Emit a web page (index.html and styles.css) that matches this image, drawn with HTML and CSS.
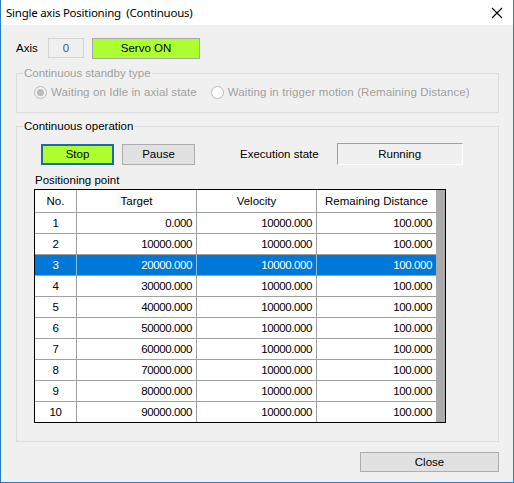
FILE: index.html
```html
<!DOCTYPE html>
<html>
<head>
<meta charset="utf-8">
<link rel="stylesheet" href="styles.css">
</head>
<body>
<div class="window">
  <div class="titlebar">
    <span class="title">Single axis Positioning&nbsp; (Continuous)</span>
    <svg class="close-x" width="12" height="12" viewBox="0 0 12 12"><path d="M1 1 L11 11 M11 1 L1 11" stroke="#000" stroke-width="1.1" fill="none"/></svg>
  </div>
  <div class="content">
    <div class="axis-row">
      <span class="axis-label">Axis</span>
      <span class="axis-box">0</span>
      <span class="servo">Servo ON</span>
    </div>
    <fieldset class="group standby">
      <legend>Continuous standby type</legend>
      <div class="radios">
        <span class="radio checked"></span><span class="radio-text">Waiting on Idle in axial state</span>
        <span class="radio"></span><span class="radio-text">Waiting in trigger motion (Remaining Distance)</span>
      </div>
    </fieldset>
    <fieldset class="group operation">
      <legend class="active">Continuous operation</legend>
      <div class="op-row">
        <span class="btn stop">Stop</span>
        <span class="btn pause">Pause</span>
        <span class="state-label">Execution state</span>
        <span class="state-box">Running</span>
      </div>
      <div class="points-label">Positioning point</div>
      <div class="grid-frame">
        <table class="grid">
          <colgroup><col class="c-no"><col class="c-val"><col class="c-val"><col class="c-last"></colgroup>
          <thead>
            <tr><th>No.</th><th>Target</th><th>Velocity</th><th class="last">Remaining Distance</th></tr>
          </thead>
          <tbody>
            <tr><td class="no">1</td><td>0.000</td><td>10000.000</td><td class="last">100.000</td></tr>
            <tr><td class="no">2</td><td>10000.000</td><td>10000.000</td><td class="last">100.000</td></tr>
            <tr class="sel"><td class="no">3</td><td>20000.000</td><td>10000.000</td><td class="last">100.000</td></tr>
            <tr><td class="no">4</td><td>30000.000</td><td>10000.000</td><td class="last">100.000</td></tr>
            <tr><td class="no">5</td><td>40000.000</td><td>10000.000</td><td class="last">100.000</td></tr>
            <tr><td class="no">6</td><td>50000.000</td><td>10000.000</td><td class="last">100.000</td></tr>
            <tr><td class="no">7</td><td>60000.000</td><td>10000.000</td><td class="last">100.000</td></tr>
            <tr><td class="no">8</td><td>70000.000</td><td>10000.000</td><td class="last">100.000</td></tr>
            <tr><td class="no">9</td><td>80000.000</td><td>10000.000</td><td class="last">100.000</td></tr>
            <tr class="final"><td class="no">10</td><td>90000.000</td><td>10000.000</td><td class="last">100.000</td></tr>
          </tbody>
        </table>
        <div class="strip"></div>
      </div>
    </fieldset>
    <div class="footer">
      <span class="btn close">Close</span>
    </div>
  </div>
</div>
</body>
</html>
```

FILE: styles.css
```css
* { box-sizing: border-box; }
html, body { margin: 0; padding: 0; background: #fff; }
body {
  font-family: "Liberation Sans", Arial, sans-serif;
  font-size: 11.5px;
  color: #000;
}
.window {
  width: 514px;
  height: 483px;
  border: 1px solid #2b7cc6;
  border-top: none;
  background: #f0f0f0;
  display: flex;
  flex-direction: column;
}
.titlebar {
  height: 25px;
  background: #fff;
  display: flex;
  align-items: center;
  justify-content: space-between;
  padding: 0 10px 0 5px;
  flex: none;
}
.title {
  font-family: "Noto Sans", "Open Sans", sans-serif;
  font-size: 11.5px;
  letter-spacing: -0.25px;
}
.close-x { display: block; margin-top: 1px; }
.content { flex: 1; display: flex; flex-direction: column; }

.axis-row {
  margin: 13px 0 0 15px;
  height: 20px;
  display: flex;
  align-items: center;
}
.axis-label { width: 32px; }
.axis-box {
  width: 36px;
  height: 20px;
  border: 1px solid #d4d4d4;
  color: #555;
  display: flex;
  align-items: center;
  justify-content: center;
}
.servo {
  margin-left: 8px;
  width: 108px;
  height: 21px;
  border: 1px solid #a8a8a8;
  background: #adff2f;
  display: flex;
  align-items: center;
  justify-content: center;
}

.group {
  margin: 0 14px 0 15px;
  border: 1px solid #dcdcdc;
  padding: 0 6px;
  min-width: 0;
}
.group legend {
  padding: 0 1px;
  line-height: 14px;
  height: 14px;
  color: #a0a0a0;
}
.group legend.active { color: #000; }
.standby { margin-top: 8px; padding-bottom: 13px; }
.radios {
  margin: 5px 0 0 11px;
  height: 14px;
  display: flex;
  align-items: center;
  color: #a0a0a0;
}
.radio {
  width: 13px;
  height: 13px;
  border-radius: 50%;
  border: 1px solid #bcbcbc;
  background: #fff;
  display: inline-flex;
  align-items: center;
  justify-content: center;
  flex: none;
}
.radio.checked { background: #f0f0f0; }
.radio.checked::after {
  content: "";
  width: 7px;
  height: 7px;
  border-radius: 50%;
  background: #bcbcbc;
}
.radio-text { margin-left: 4px; margin-right: 14px; letter-spacing: 0.1px; }

.operation { margin-top: 6px; padding-bottom: 18px; }
.op-row {
  margin: 10px 0 0 18px;
  height: 22px;
  display: flex;
  align-items: center;
}
.btn {
  display: inline-flex;
  align-items: center;
  justify-content: center;
}
.stop {
  width: 73px;
  height: 21px;
  border: 2px solid #1e6aa8;
  background: #adff2f;
}
.pause {
  margin-left: 8px;
  width: 73px;
  height: 21px;
  border: 1px solid #adadad;
  background: #e1e1e1;
}
.state-label { margin-left: 45px; }
.state-box {
  margin-left: 18px;
  width: 126px;
  height: 22px;
  border: 1px solid #a0a0a0;
  border-right-color: #fff;
  border-bottom-color: #fff;
  display: flex;
  align-items: center;
  justify-content: center;
}
.points-label {
  margin: 8px 0 0 12px;
  height: 14px;
  line-height: 14px;
}
.grid-frame {
  margin: 2px 0 0 11px;
  width: 412px;
  height: 234px;
  border: 1px solid #000;
  background: #fff;
  display: flex;
}
.grid {
  border-collapse: separate;
  border-spacing: 0;
  table-layout: fixed;
  width: 401px;
  flex: none;
}
.c-no { width: 42px; }
.c-val { width: 120px; }
.c-last { width: 119px; }
.grid th, .grid td {
  padding: 0 4px 0 0;
  border-right: 1px solid #a0a0a0;
  border-bottom: 1px solid #a0a0a0;
  font-weight: normal;
  white-space: nowrap;
  overflow: hidden;
}
.grid th {
  height: 23px;
  text-align: center;
  padding: 0;
}
.grid td {
  height: 21px;
  text-align: right;
  letter-spacing: -0.4px;
}
.grid td.no { text-align: center; padding: 0; }
.grid .last { border-right: none; }
.grid tr.final td { border-bottom: none; height: 20px; }
.grid tr.sel td {
  background: #0078d7;
  color: #fff;
  border-right-color: #8cc0ea;
  border-bottom-color: #a0a0a0;
}
.grid tr.sel td.last { border-right: none; }
.strip {
  flex: 1;
  background: #ababab;
}

.footer {
  margin-top: 10px;
  padding-right: 14px;
  display: flex;
  justify-content: flex-end;
}
.close {
  width: 139px;
  height: 20px;
  border: 1px solid #adadad;
  background: #e1e1e1;
}
```
